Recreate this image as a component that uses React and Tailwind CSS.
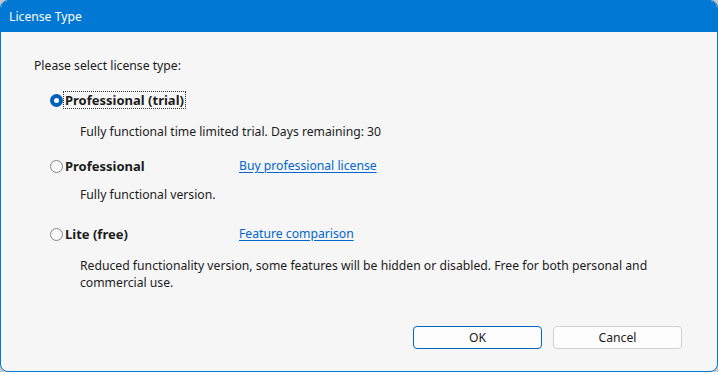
import React, { useState } from 'react';

const options = [
  {
    id: 'trial',
    label: 'Professional (trial)',
    desc: ['Fully functional time limited trial. Days remaining: 30'],
  },
  {
    id: 'pro',
    label: 'Professional',
    link: 'Buy professional license',
    desc: ['Fully functional version.'],
  },
  {
    id: 'lite',
    label: 'Lite (free)',
    link: 'Feature comparison',
    desc: [
      'Reduced functionality version, some features will be hidden or disabled. Free for both personal and',
      'commercial use.',
    ],
  },
];

const Radio = ({ checked }) =>
  checked ? (
    <span className="w-[13px] h-[13px] rounded-full bg-[#005fb8] flex items-center justify-center shrink-0">
      <span className="w-[5px] h-[5px] rounded-full bg-white" />
    </span>
  ) : (
    <span className="w-[13px] h-[13px] rounded-full border border-[#858585] bg-[#f9f9f9] shrink-0" />
  );

const App = () => {
  const [selected, setSelected] = useState('trial');

  const rowMargins = ['mt-[17px]', 'mt-[17px]', 'mt-[22px]'];
  const descMargins = ['mt-[14px]', 'mt-[11px]', 'mt-[14px]'];

  return (
    <div
      className="w-[718px] h-[372px] bg-[#c8c8c8] text-[12.2px] text-[#1b1b1b]"
      style={{ fontFamily: '"Noto Sans", "Open Sans", sans-serif' }}
    >
      <div className="w-full h-full flex flex-col border border-[#0078d4] rounded-[8px] overflow-hidden bg-[#f6f6f6]">
        <div className="h-[31px] bg-[#0078d4] text-white flex items-center pl-[8px] leading-[16px]">
          License Type
        </div>

        <div className="flex-1 flex flex-col pt-[26px] pl-[33px]">
          <div className="leading-[16px]">Please select license type:</div>

          {options.map((opt, i) => (
            <div key={opt.id}>
              <div
                className={`${rowMargins[i]} h-[18px] flex items-center pl-[16px] cursor-default`}
                onClick={() => setSelected(opt.id)}
              >
                <Radio checked={selected === opt.id} />
                <div className="w-[176px] flex items-center">
                  <span
                    className={`h-[18px] flex items-center px-[1px] font-bold text-[13px] leading-[16px] border border-dotted ${
                      selected === opt.id ? 'border-[#333]' : 'border-transparent'
                    }`}
                  >
                    {opt.label}
                  </span>
                </div>
                {opt.link && (
                  <a href="#" className="text-[#0066cc] underline underline-offset-2 leading-[16px]">
                    {opt.link}
                  </a>
                )}
              </div>
              <div className={`${descMargins[i]} pl-[46px] leading-[17px]`}>
                {opt.desc.map((line) => (
                  <div key={line}>{line}</div>
                ))}
              </div>
            </div>
          ))}

          <div className="mt-[35px] flex justify-end gap-[11px] pr-[35px]">
            <button className="w-[129px] h-[23px] rounded-[4px] border border-[#0067c0] bg-[#fdfdfd] leading-[16px]">
              OK
            </button>
            <button className="w-[129px] h-[23px] rounded-[4px] border border-[#d0d0d0] bg-[#fdfdfd] leading-[16px]">
              Cancel
            </button>
          </div>
        </div>
      </div>
    </div>
  );
};

export default App;
